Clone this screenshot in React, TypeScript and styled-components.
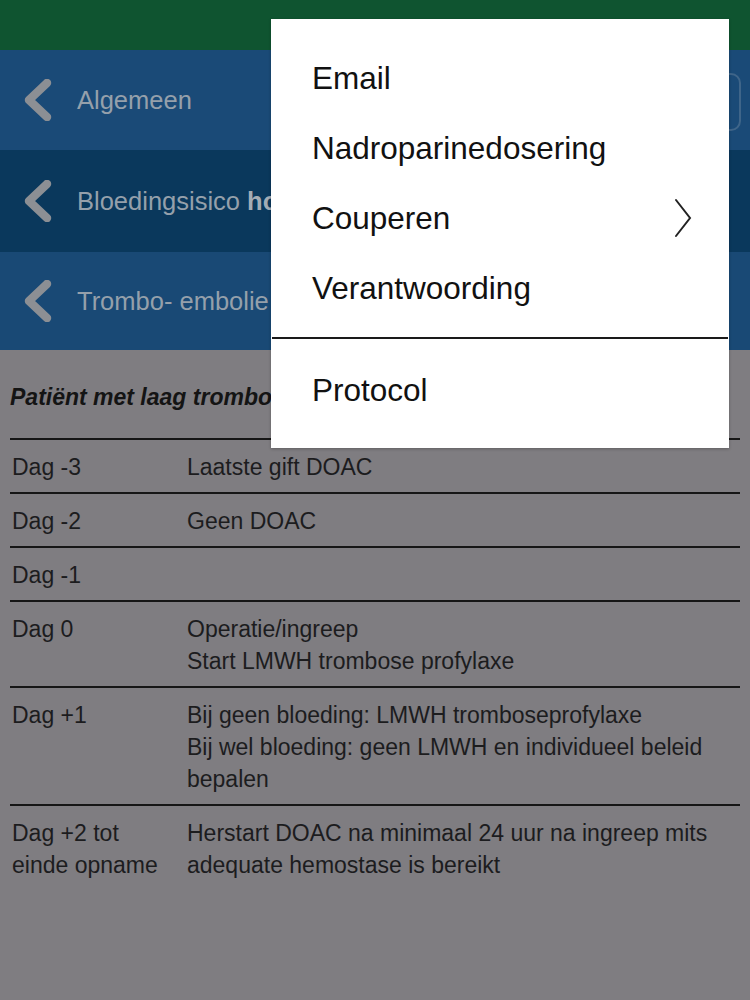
import React from "react";
import styled, { createGlobalStyle } from "styled-components";

const Global = createGlobalStyle`
  html, body { margin: 0; padding: 0; }
  body {
    background: #7f7d81;
    font-family: "Liberation Sans", Arial, sans-serif;
    width: 750px;
    height: 1000px;
    overflow: hidden;
  }
`;

const Page = styled.div`
  position: relative;
  width: 750px;
  height: 1000px;
  display: flex;
  flex-direction: column;
  background: #7f7d81;
`;

const Header = styled.header`
  height: 50px;
  background: #0f5430;
  display: flex;
  align-items: flex-start;
  padding-left: 278px;
  box-sizing: border-box;
`;

const Title = styled.span`
  margin-top: 14px;
  color: #6f8d7c;
  font-size: 26px;
  font-weight: 700;
`;

const NavRow = styled.div<{ $bg: string; $h: number }>`
  height: ${(p) => p.$h}px;
  background: ${(p) => p.$bg};
  display: flex;
  align-items: center;
  padding-left: 24px;
  gap: 25px;
  box-sizing: border-box;
  position: relative;
`;

const NavLabel = styled.span`
  color: #95a0ab;
  font-size: 25.5px;
  white-space: nowrap;
  b { font-weight: 700; color: #a3acb5; }
`;

const SearchBox = styled.div`
  position: absolute;
  right: 9px;
  top: 23px;
  width: 120px;
  height: 54px;
  border: 2px solid rgba(150, 165, 180, 0.3);
  border-radius: 10px;
`;

const Content = styled.main`
  padding: 0 10px;
  display: flex;
  flex-direction: column;
`;

const Heading = styled.h2`
  margin: 31px 0 25px 0;
  font-size: 23px;
  line-height: 32px;
  font-weight: 700;
  font-style: italic;
  color: #141414;
  white-space: nowrap;
`;

const Table = styled.div`
  display: grid;
  grid-template-columns: 177px 1fr;
`;

const Cell = styled.div<{ $first?: boolean }>`
  border-top: 2px solid #161616;
  padding: ${(p) => (p.$first ? "11px 8px 9px 2px" : "11px 0 9px 0")};
  font-size: 23px;
  line-height: 32px;
  color: #1c1c1e;
`;

const Menu = styled.div`
  position: absolute;
  left: 271px;
  top: 19px;
  width: 458px;
  height: 429px;
  background: #ffffff;
  box-shadow: 0 1px 3px rgba(0, 0, 0, 0.25);
  padding: 24px 0 23px 0;
  box-sizing: border-box;
  display: flex;
  flex-direction: column;
`;

const MenuItem = styled.div`
  height: 70px;
  display: flex;
  align-items: center;
  justify-content: space-between;
  padding: 0 37px 0 41px;
  font-size: 31.5px;
  color: #111111;
`;

const Separator = styled.div`
  height: 2px;
  background: #1a1a1a;
  margin: 14px 1px 16px 1px;
`;

const LeftChevron = () => (
  <svg width="28" height="42" viewBox="0 0 28 42">
    <path
      d="M23 4 L5 21 L23 38"
      fill="none"
      stroke="#8c8f94"
      strokeWidth="8.5"
      strokeLinecap="round"
      strokeLinejoin="round"
    />
  </svg>
);

const RightChevron = () => (
  <svg width="18" height="40" viewBox="0 0 18 40">
    <path
      d="M2 2 L16 20 L2 38"
      fill="none"
      stroke="#222"
      strokeWidth="2"
      strokeLinecap="round"
      strokeLinejoin="miter"
    />
  </svg>
);

const rows: [string, React.ReactNode][] = [
  ["Dag -3", "Laatste gift DOAC"],
  ["Dag -2", "Geen DOAC"],
  ["Dag -1", ""],
  ["Dag 0", <>Operatie/ingreep<br />Start LMWH trombose profylaxe</>],
  [
    "Dag +1",
    <>
      Bij geen bloeding: LMWH tromboseprofylaxe
      <br />
      Bij wel bloeding: geen LMWH en individueel beleid bepalen
    </>,
  ],
  [
    "Dag +2 tot einde opname",
    "Herstart DOAC na minimaal 24 uur na ingreep mits adequate hemostase is bereikt",
  ],
];

export default function App() {
  return (
    <>
      <Global />
      <Page>
        <Header>
          <Title>Postoperatief beleid</Title>
        </Header>
        <NavRow $bg="#1a4a77" $h={100}>
          <LeftChevron />
          <NavLabel>Algemeen</NavLabel>
          <SearchBox />
        </NavRow>
        <NavRow $bg="#0a385c" $h={102}>
          <LeftChevron />
          <NavLabel>
            Bloedingsisico <b>hoog</b>
          </NavLabel>
        </NavRow>
        <NavRow $bg="#194975" $h={98}>
          <LeftChevron />
          <NavLabel>Trombo- embolie risico laag</NavLabel>
        </NavRow>
        <Content>
          <Heading>Patiënt met laag trombo-embolie risico</Heading>
          <Table>
            {rows.map(([day, text], i) => (
              <React.Fragment key={i}>
                <Cell $first>{day}</Cell>
                <Cell>{text}</Cell>
              </React.Fragment>
            ))}
          </Table>
        </Content>
        <Menu>
          <MenuItem>Email</MenuItem>
          <MenuItem>Nadroparinedosering</MenuItem>
          <MenuItem>
            Couperen
            <RightChevron />
          </MenuItem>
          <MenuItem>Verantwoording</MenuItem>
          <Separator />
          <MenuItem>Protocol</MenuItem>
        </Menu>
      </Page>
    </>
  );
}
